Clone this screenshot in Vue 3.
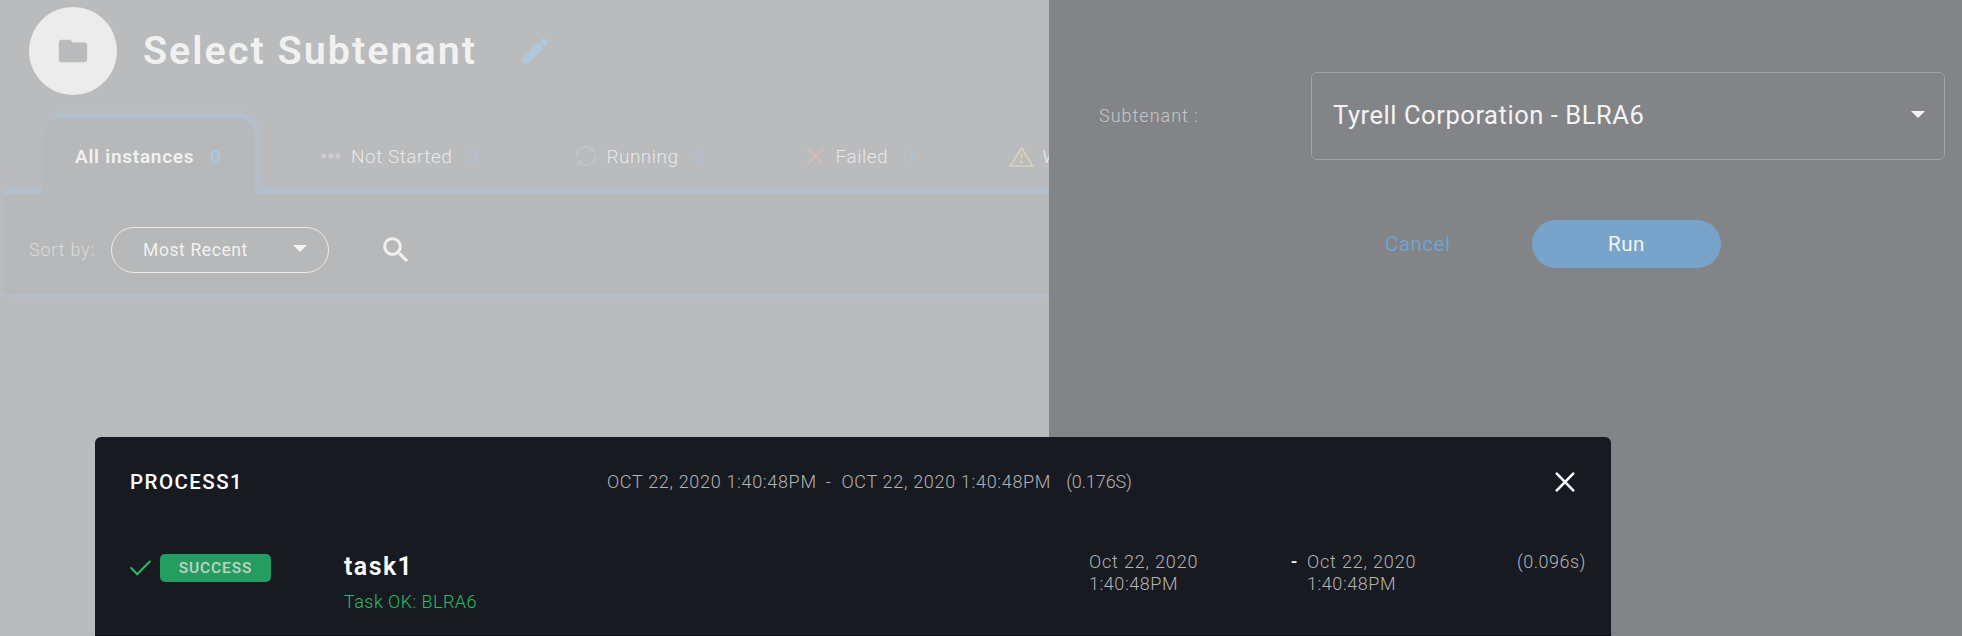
<script setup>
const tabs = [
  { key: 'idle', label: 'Not Started' },
  { key: 'run', label: 'Running' },
  { key: 'fail', label: 'Failed' },
  { key: 'warn', label: 'Warning' }
]
</script>

<template>
  <div class="app">
    <main class="page">
      <header class="head">
        <span class="avatar"><svg width="34" height="34" viewBox="0 0 24 24"><path fill="#babbbd" d="M10 4H4c-1.100 0-2 .9-2 2v12c0 1.100.9 2 2 2h16c1.100 0 2-.9 2-2V8c0-1.100-.9-2-2-2h-8z" /></svg></span>
        <h1 class="title">Select Subtenant</h1>
        <svg class="edit" width="33" height="33" viewBox="0 0 24 24"><path fill="#afc8e1" d="M3 17.250V21h3.750L17.810 9.940l-3.750-3.750zM20.710 7.040a1 1 0 0 0 0-1.410l-2.340-2.340a1 1 0 0 0-1.410 0l-1.830 1.830 3.750 3.750z" /></svg>
      </header>

      <nav class="tabs">
        <div class="tab active"><span class="label">All instances</span><span class="count">0</span></div>
        <div v-for="t in tabs" :key="t.key" class="tab" :class="t.key">
          <svg v-if="t.key === 'idle'" class="icon" width="20" height="6" viewBox="0 0 20 6" fill="#cccdd4"><circle cx="2.700" cy="3" r="2.500" /><circle cx="9.800" cy="3" r="2.500" /><circle cx="16.900" cy="3" r="2.500" /></svg>
          <svg v-else-if="t.key === 'run'" class="icon" width="20" height="20" viewBox="0 0 20 20" fill="none" stroke="#c1c3cc" stroke-width="1.700"><path d="M.9 10.500A9 9 0 0 1 16.800 4.200M17.600 .6V5H13.400M19.100 9.500A9 9 0 0 1 3.200 15.800M2.400 19.400V15H6.600" /></svg>
          <svg v-else-if="t.key === 'fail'" class="icon" width="17" height="17" viewBox="0 0 17 17" fill="none" stroke="#dab9b6" stroke-width="1.700"><path d="M.8 .8 16.200 16.200M16.200 .8 .8 16.200" /></svg>
          <svg v-else class="icon" width="25" height="21" viewBox="0 0 25 21"><path d="M12.500 1.800 23.600 20H1.400z" fill="none" stroke="#ddd1b5" stroke-width="1.700" /><path d="M12.500 7v5.500" stroke="#ddd1b5" stroke-width="1.700" /><circle cx="12.500" cy="16" r="1.500" fill="#ddd1b5" /></svg>
          <span class="label">{{ t.label }}</span><span v-if="t.key !== 'warn'" class="count">0</span>
        </div>
      </nav>

      <section class="toolbar">
        <span class="sort-label">Sort by:</span>
        <div class="pill"><span class="pill-text">Most Recent</span><span class="caret"></span></div>
        <svg class="search" width="34" height="34" viewBox="0 0 24 24"><path fill="#f0f0f0" stroke="#f0f0f0" stroke-width=".2" d="M15.500 14h-.79l-.28-.27A6.470 6.470 0 0 0 16 9.500 6.500 6.500 0 1 0 9.500 16c1.610 0 3.090-.59 4.230-1.570l.27.28v.79l5 4.990L20.490 19zm-6 0C7.010 14 5 11.990 5 9.500S7.010 5 9.500 5 14 7.010 14 9.500 11.990 14 9.500 14z" /></svg>
      </section>
    </main>

    <aside class="side">
      <div class="field">
        <span class="field-label">Subtenant :</span>
        <div class="select"><span class="field-text">Tyrell Corporation - BLRA6</span><span class="caret"></span></div>
      </div>
      <div class="actions"><button class="cancel">Cancel</button><button class="submit">Run</button></div>
    </aside>

    <div class="modal">
      <div class="modal-head">
        <span class="name">PROCESS1</span>
        <div class="range"><span>OCT 22, 2020 1:40:48PM</span><span class="dash">-</span><span>OCT 22, 2020 1:40:48PM</span><span class="dur">(0.176S)</span></div>
        <svg class="close" width="20" height="20" viewBox="0 0 20 20" fill="none" stroke="#fff" stroke-width="2.600" stroke-linecap="round"><path d="M1.800 1.600 18.200 18.400M18.200 1.600 1.800 18.400" /></svg>
      </div>
      <div class="task">
        <div class="status">
          <svg width="21" height="16" viewBox="0 0 21 16" fill="none" stroke="#2abb6a" stroke-width="2" stroke-linecap="round"><path d="M1.200 8 7.200 14.200 19.800 1.500" /></svg>
          <span class="badge">SUCCESS</span>
        </div>
        <div class="info"><div class="task-name">task1</div><div class="task-msg">Task OK: BLRA6</div></div>
        <div class="when">Oct 22, 2020<br /><span class="time">1:40:48PM</span></div>
        <div class="sep">-</div>
        <div class="when">Oct 22, 2020<br /><span class="time">1:40:48PM</span></div>
        <div class="tdur">(0.096s)</div>
      </div>
    </div>
  </div>
</template>

<style>
body { margin: 0; overflow: hidden; }
</style>

<style scoped>
.app { position: relative; display: flex; width: 1962px; height: 636px; overflow: hidden; background: #babbbc; font-family: Roboto, "Open Sans", sans-serif; white-space: nowrap; }
.page { width: 1049px; height: 636px; overflow: hidden; flex: none; }
.head { display: flex; align-items: center; height: 101px; padding-left: 29px; }
.avatar { display: flex; align-items: center; justify-content: center; width: 88px; height: 88px; border-radius: 50%; background: #ececec; }
.title { width: 352px; margin: 0 0 0 26px; font-size: 39.500px; font-weight: 600; line-height: 44px; letter-spacing: 2px; color: #f1f1f1; }
.edit { margin-left: 24px; }
.tabs { position: relative; z-index: 1; display: flex; height: 76px; margin-top: 17px; padding-left: 43px; }
.tab { display: flex; align-items: center; flex: none; box-sizing: border-box; margin-right: 97px; font-size: 19px; font-weight: 300; letter-spacing: .5px; color: #e8e8ea; }
.active { position: relative; width: 212px; margin-right: 66px; padding-left: 32px; border-radius: 18px 18px 0 0; background: #b7b8b9; font-weight: 600; letter-spacing: .74px; color: #f1f1f1; box-shadow: 3px -4px 6px #b1c3d3; clip-path: inset(-14px -14px 0 0); }
.run { margin-right: 101px; }
.fail { margin-right: 94px; }
.icon + .label { margin-left: 10px; }
.fail .icon + .label { margin-left: 12px; }
.warn .icon + .label { margin-left: 8px; }
.count { margin-left: 16px; color: #aac3da; }
.active .count { color: #aac8e3; }
.toolbar { display: flex; align-items: center; box-sizing: border-box; width: 1100px; height: 100px; margin-left: 4px; padding: 12px 0 0 25px; border-radius: 5px; background: #b7b8b9; box-shadow: 0 -5px 5px #b2c1ce, 0 5px 5px #b6bec9, 0 -10px 14px -2px #b8bdc3; }
.sort-label { width: 82px; font-size: 18px; font-weight: 300; letter-spacing: .79px; line-height: 20px; color: #d9d9da; }
.pill { display: flex; align-items: center; box-sizing: border-box; width: 218px; height: 46px; border: 1px solid #ececec; border-radius: 23px; }
.pill-text { width: 150px; padding-left: 31px; font-size: 17.500px; letter-spacing: .61px; color: #f1f1f1; }
.caret { border: 7px solid transparent; border-top-color: #f3f3f3; border-bottom: 0; }
.pill .caret { margin-top: -4px; }
.search { margin-left: 50px; }
.side { flex: 1; background: #838487; padding-top: 72px; }
.field { display: flex; align-items: center; height: 88px; padding-left: 50px; }
.field-label { width: 212px; margin-top: -1px; font-size: 18px; font-weight: 300; letter-spacing: 1px; color: #c6c6c8; }
.select { display: flex; align-items: center; justify-content: space-between; box-sizing: border-box; width: 634px; height: 88px; padding: 0 19px 3px 21px; border: 1px solid #a3a4a6; border-radius: 6px; }
.field-text { font-size: 25.500px; letter-spacing: .56px; color: #f4f4f4; }
.actions { display: flex; align-items: center; margin-top: 60px; padding-left: 336px; }
button { border: 0; padding: 0; background: none; font: 400 20.500px Roboto, sans-serif; letter-spacing: .5px; }
.cancel { width: 147px; text-align: left; color: #72a2cf; }
.submit { width: 189px; height: 48px; border-radius: 24px; background: #78a4cb; color: #f4f4f4; }
.modal { position: absolute; left: 95px; top: 437px; box-sizing: border-box; width: 1516px; height: 199px; border-bottom: 1px solid #100b16; border-radius: 6px 6px 0 0; background: #181a21; color: #fff; }
.modal-head { display: flex; align-items: center; height: 89px; padding-left: 35px; }
.name { width: 477px; font-size: 20.500px; font-weight: 500; letter-spacing: 1.450px; }
.range { display: flex; width: 948px; font-size: 18px; font-weight: 300; letter-spacing: .68px; color: #b4b4b3; }
.dash { margin: 0 10px 0 9px; }
.dur { margin-left: 15px; letter-spacing: -.1px; }
.task { display: grid; grid-template-columns: 214px 745px 202px 16px 210px 100px; padding: 25px 0 0 35px; font-size: 18px; font-weight: 300; line-height: 22px; letter-spacing: .82px; color: #b4b4b3; }
.status { display: flex; align-items: center; height: 33px; }
.badge { width: 111px; height: 28px; margin-left: 9px; border-radius: 5px; background: #249d60; text-align: center; line-height: 28px; font-size: 15.500px; font-weight: 500; letter-spacing: .9px; color: #c5d2c9; }
.task-name { padding-top: 1px; font-size: 25px; font-weight: 600; line-height: 30px; letter-spacing: 1.400px; color: #fff; }
.task-msg { margin-top: 9px; letter-spacing: .45px; color: #2abb6a; }
.time { letter-spacing: .54px; }
.sep { color: #fff; font-weight: 500; }
.tdur { letter-spacing: .5px; }
</style>
